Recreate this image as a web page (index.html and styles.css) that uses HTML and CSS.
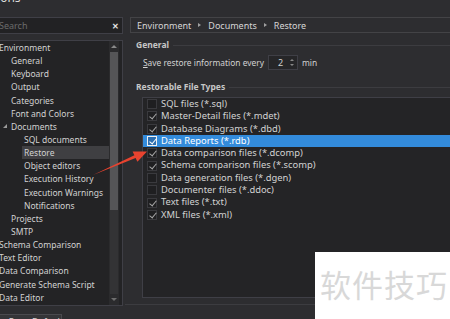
FILE: index.html
```html
<!DOCTYPE html>
<html>
  <head>
    <title>Options</title>
    <meta name="viewport" content="width=device-width, initial-scale=1">
    <link rel="stylesheet" href="styles.css">
  </head>
  <body>
    <div class="window">
      <div class="caption">Options</div>

      <div class="main">
        <aside class="side">
          <div class="search">
            <span class="search-ph">Search</span>
            <span class="search-x">&#x2715;</span>
          </div>
          <div class="tree">
            <ul class="tree-list">
              <li class="lvl0">Environment</li>
              <li class="lvl1">General</li>
              <li class="lvl1">Keyboard</li>
              <li class="lvl1">Output</li>
              <li class="lvl1">Categories</li>
              <li class="lvl1">Font and Colors</li>
              <li class="lvl1 open"><span class="twisty"></span>Documents</li>
              <li class="lvl2">SQL documents</li>
              <li class="lvl2 sel">Restore</li>
              <li class="lvl2">Object editors</li>
              <li class="lvl2">Execution History</li>
              <li class="lvl2">Execution Warnings</li>
              <li class="lvl2">Notifications</li>
              <li class="lvl1">Projects</li>
              <li class="lvl1">SMTP</li>
              <li class="lvl0">Schema Comparison</li>
              <li class="lvl0">Text Editor</li>
              <li class="lvl0">Data Comparison</li>
              <li class="lvl0">Generate Schema Script</li>
              <li class="lvl0">Data Editor</li>
            </ul>
            <div class="scroll">
              <span class="sc-up"></span>
              <div class="sc-thumb"></div>
              <div class="sc-fill"></div>
              <span class="sc-down"></span>
            </div>
          </div>
        </aside>

        <section class="pane">
          <div class="crumbs">
            <span>Environment</span><span class="sep"></span>
            <span>Documents</span><span class="sep"></span>
            <span>Restore</span>
          </div>

          <div class="group">General</div>
          <div class="row">
            <span><u>S</u>ave restore information every</span>
            <div class="spin">
              <span>2</span>
              <span class="spin-btns"><i class="up"></i><i class="down"></i></span>
            </div>
            <span>min</span>
          </div>

          <div class="group group-files">Restorable File Types</div>
          <div class="files">
            <div class="file"><span class="cb"></span>SQL files (*.sql)</div>
            <div class="file"><span class="cb on"></span>Master-Detail files (*.mdet)</div>
            <div class="file"><span class="cb on"></span>Database Diagrams (*.dbd)</div>
            <div class="file sel"><span class="cb on"></span>Data Reports (*.rdb)</div>
            <div class="file"><span class="cb on"></span>Data comparison files (*.dcomp)</div>
            <div class="file"><span class="cb on"></span>Schema comparison files (*.scomp)</div>
            <div class="file"><span class="cb"></span>Data generation files (*.dgen)</div>
            <div class="file"><span class="cb"></span>Documenter files (*.ddoc)</div>
            <div class="file"><span class="cb on"></span>Text files (*.txt)</div>
            <div class="file"><span class="cb on"></span>XML files (*.xml)</div>
          </div>
          <div class="pane-foot"></div>
        </section>
      </div>

      <div class="footer">
        <button class="btn">Reset Page Default</button>
      </div>
    </div>

    <svg class="arrow" width="450" height="319" viewBox="0 0 450 319">
      <polygon points="93,175 134.4,155.3 132.6,151.6 147,151.5 137.4,161.8 135.6,158.1" fill="#e8432f"/>
    </svg>

    <div class="watermark">软件技巧</div>
  </body>
</html>
```

FILE: styles.css
```css
body {
  margin: 0;
  width: 450px;
  height: 319px;
  overflow: hidden;
  position: relative;
  background-color: #2d2d30;
  color: #d2d2d2;
  font-family: "Noto Sans", "Liberation Sans", sans-serif;
  font-size: 8.5px;
}

.window { margin-top: -9px; }

.caption {
  height: 13px;
  line-height: 13px;
  font-size: 12px;
  text-indent: -24px;
  white-space: nowrap;
  overflow: hidden;
  color: #dcdcdc;
}

.main {
  display: grid;
  grid-template-columns: 125px 1fr;
  column-gap: 7px;
  padding-top: 13px;
  margin-left: -2px;
}

/* left side: search + tree */
.search {
  height: 17px;
  box-sizing: border-box;
  border: 1px solid #3f3f46;
  background-color: #222224;
  display: flex;
  align-items: center;
  justify-content: space-between;
  padding: 0 3px 0 0;
}
.search-ph { color: #6b6b6b; font-size: 9px; }
.search-x { color: #e6e6e6; font-size: 8px; font-weight: bold; }

.tree {
  margin-top: 6px;
  height: 266px;
  box-sizing: border-box;
  border: 1px solid #3f3f46;
  background-color: #232325;
  display: flex;
}
.tree-list {
  flex: 1;
  list-style: none;
  margin: 0;
  padding: 0;
  white-space: nowrap;
}
.tree-list li { line-height: 13.15px; height: 13.15px; }
.lvl0 { padding-left: 0; }
.lvl1 { padding-left: 12px; }
.lvl2 { margin-left: 23px; padding-left: 2px; }
.tree-list .sel { background-color: #3f3f42; }
.open { position: relative; }
.twisty {
  position: absolute;
  left: 4px;
  top: 4px;
  width: 0;
  height: 0;
  border-left: 4px solid transparent;
  border-bottom: 4px solid #9a9a9a;
}

.scroll {
  width: 10px;
  margin-right: 3px;
  display: flex;
  flex-direction: column;
  align-items: center;
  background-color: #2b2b2d;
}
.sc-up, .sc-down {
  width: 0;
  height: 0;
  border-left: 3px solid transparent;
  border-right: 3px solid transparent;
  margin: 4px 0;
}
.sc-up { border-bottom: 3px solid #8a8a8a; }
.sc-down { border-top: 3px solid #6e6e6e; }
.sc-thumb { width: 8px; height: 158px; background-color: #555557; }
.sc-fill { flex: 1; width: 8px; background-color: #333335; }

/* right pane */
.pane { display: flex; flex-direction: column; margin-right: -4px; }

.crumbs {
  height: 16px;
  box-sizing: border-box;
  border: 1px solid #434346;
  padding-left: 6px;
  display: flex;
  align-items: center;
  gap: 7px;
  font-size: 9px;
  color: #d6d6d6;
}
.sep {
  width: 0;
  height: 0;
  border-top: 2.5px solid transparent;
  border-bottom: 2.5px solid transparent;
  border-left: 3px solid #a0a0a0;
}

.group {
  margin-top: 6px;
  margin-left: 6px;
  height: 12px;
  line-height: 12px;
  display: flex;
  align-items: center;
  gap: 4px;
  font-weight: bold;
  color: #c6c6c6;
}
.group::after { content: ""; flex: 1; height: 1px; background-color: #3c3c40; }
.group-files { margin-top: 11px; }

.row {
  margin-top: 3px;
  margin-left: 13px;
  height: 16px;
  display: flex;
  align-items: center;
  gap: 4px;
  font-size: 8.4px;
}
.spin {
  width: 30px;
  height: 15px;
  box-sizing: border-box;
  border: 1px solid #3f3f46;
  background-color: #262628;
  display: flex;
  align-items: center;
  justify-content: space-between;
  padding: 0 3px 0 9px;
  font-size: 9px;
}
.spin-btns { display: flex; flex-direction: column; gap: 3px; }
.spin-btns i { width: 0; height: 0; border-left: 2.5px solid transparent; border-right: 2.5px solid transparent; }
.spin-btns .up { border-bottom: 2.5px solid #888; }
.spin-btns .down { border-top: 2.5px solid #888; }

.files {
  margin-top: 4px;
  margin-left: 12px;
  height: 201px;
  box-sizing: border-box;
  border: 1px solid #3f3f46;
  background-color: #242426;
}
.file {
  height: 12.3px;
  line-height: 12.3px;
  display: flex;
  align-items: center;
  gap: 4px;
  padding-left: 4px;
  font-size: 9.4px;
  white-space: nowrap;
}
.file.sel { background-color: #338bdb; color: #fff; }
.cb {
  width: 10px;
  height: 10px;
  box-sizing: border-box;
  border: 1px solid #3a3a3e;
  background-color: #1f1f21;
  position: relative;
}
.cb.on::after {
  content: "";
  position: absolute;
  left: 3px;
  top: 0px;
  width: 3px;
  height: 6px;
  border-right: 1px solid #a8a8a8;
  border-bottom: 1px solid #a8a8a8;
  transform: rotate(40deg);
}
.file.sel .cb { border-color: #f0f0f0; background-color: #2d6fb0; }
.file.sel .cb.on::after { border-color: #fff; }

.pane-foot { margin-top: 6px; margin-left: -5px; border-top: 1px solid #3c3c40; }

.footer { padding-top: 8px; margin-left: -2px; }
.btn {
  width: 64px;
  height: 14px;
  padding: 0;
  text-align: left;
  text-indent: -16px;
  overflow: hidden;
  white-space: nowrap;
  font-family: inherit;
  font-size: 9px;
  color: #d6d6d6;
  background-color: #353538;
  border: 1px solid #4a4a4e;
}

/* overlays */
.arrow { position: absolute; left: 0; top: 0; pointer-events: none; }

.watermark {
  position: absolute;
  left: 315px;
  top: 252px;
  width: 135px;
  height: 67px;
  box-sizing: border-box;
  padding: 9px 0 0 5px;
  background-color: #fff;
  color: #d8d8d8;
  font-family: "Noto Sans CJK SC", sans-serif;
  font-size: 31px;
  letter-spacing: 1px;
  white-space: nowrap;
}
```
